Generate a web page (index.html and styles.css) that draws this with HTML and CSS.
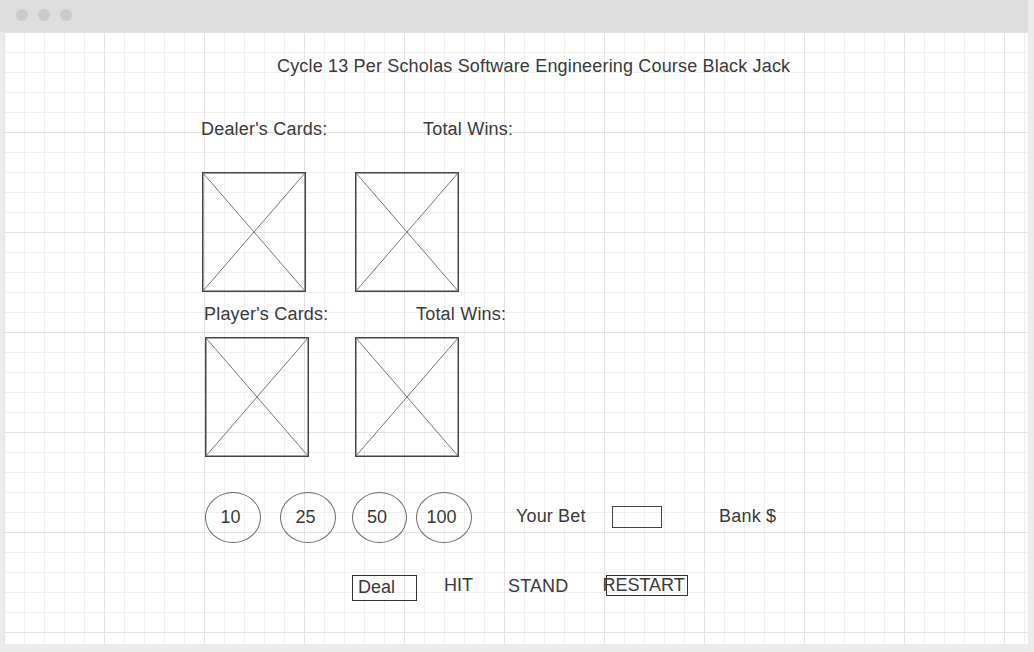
FILE: index.html
```html
<!DOCTYPE html>
<html>
<head>
<meta charset="utf-8">
<title>Black Jack</title>
<link rel="stylesheet" href="styles.css">
</head>
<body>
<div class="window">
  <div class="titlebar">
    <span class="dot"></span><span class="dot"></span><span class="dot"></span>
  </div>
  <div class="canvas">
    <h1 class="title">Cycle 13 Per Scholas Software Engineering Course Black Jack</h1>

    <div class="row labels dealer-labels">
      <span class="label dealer-label">Dealer's Cards:</span>
      <span class="label">Total Wins:</span>
    </div>

    <div class="row cards dealer-cards">
      <svg class="card" viewBox="0 0 104 120" width="104" height="120"><rect x="0.75" y="0.75" width="102.5" height="118.5" class="card-box"/><line x1="1" y1="1" x2="103" y2="119" class="card-x"/><line x1="103" y1="1" x2="1" y2="119" class="card-x"/></svg>
      <svg class="card" viewBox="0 0 104 120" width="104" height="120"><rect x="0.75" y="0.75" width="102.5" height="118.5" class="card-box"/><line x1="1" y1="1" x2="103" y2="119" class="card-x"/><line x1="103" y1="1" x2="1" y2="119" class="card-x"/></svg>
    </div>

    <div class="row labels player-labels">
      <span class="label player-label">Player's Cards:</span>
      <span class="label">Total Wins:</span>
    </div>

    <div class="row cards player-cards">
      <svg class="card" viewBox="0 0 104 120" width="104" height="120"><rect x="0.75" y="0.75" width="102.5" height="118.5" class="card-box"/><line x1="1" y1="1" x2="103" y2="119" class="card-x"/><line x1="103" y1="1" x2="1" y2="119" class="card-x"/></svg>
      <svg class="card" viewBox="0 0 104 120" width="104" height="120"><rect x="0.75" y="0.75" width="102.5" height="118.5" class="card-box"/><line x1="1" y1="1" x2="103" y2="119" class="card-x"/><line x1="103" y1="1" x2="1" y2="119" class="card-x"/></svg>
    </div>

    <div class="row chips">
      <div class="chip chip-10">10</div>
      <div class="chip chip-25">25</div>
      <div class="chip chip-50">50</div>
      <div class="chip chip-100">100</div>
      <span class="bet-label">Your Bet</span>
      <span class="bet-input"></span>
      <span class="bank-label">Bank $</span>
    </div>

    <div class="row actions">
      <span class="btn btn-deal">Deal</span>
      <span class="btn btn-hit">HIT</span>
      <span class="btn btn-stand">STAND</span>
      <span class="btn btn-restart"><span class="restart-text">RESTART</span></span>
    </div>
  </div>
</div>
</body>
</html>
```

FILE: styles.css
```css
html, body {
  margin: 0;
  padding: 0;
}

body {
  background: #ececec;
  font-family: "Liberation Sans", Arial, sans-serif;
  color: #3a3a3a;
  font-size: 18px;
  line-height: 20px;
}

.window {
  width: 1028px;
  height: 644px;
}

.titlebar {
  height: 32px;
  background: #dedede;
  display: flex;
  align-items: center;
  gap: 10px;
  padding-left: 16px;
  padding-bottom: 2px;
  box-sizing: border-box;
}

.dot {
  width: 12px;
  height: 12px;
  border-radius: 50%;
  background: #cbcbcb;
}

.canvas {
  margin-left: 4px;
  height: 612px;
  overflow: hidden;
  background-color: #fff;
  background-image:
    linear-gradient(#e3e3e3 1px, transparent 1px),
    linear-gradient(90deg, #e3e3e3 1px, transparent 1px),
    linear-gradient(#f0f0f0 1px, transparent 1px),
    linear-gradient(90deg, #f0f0f0 1px, transparent 1px);
  background-size: 100px 100px, 100px 100px, 20px 20px, 20px 20px;
}

.title {
  margin: 0;
  font-size: 18px;
  line-height: 20px;
  font-weight: normal;
  padding: 24px 0 0 273px;
  letter-spacing: 0.17px;
}

.row {
  display: flex;
  align-items: flex-start;
}

.label {
  letter-spacing: 0.2px;
}

.dealer-labels {
  margin-top: 43px;
  padding-left: 197px;
}

.dealer-label {
  width: 222px;
}

.dealer-cards {
  margin-top: 33px;
  padding-left: 198px;
  gap: 49px;
}

.player-labels {
  margin-top: 12px;
  padding-left: 200px;
}

.player-label {
  width: 212px;
}

.player-cards {
  margin-top: 13px;
  padding-left: 201px;
  gap: 46px;
}

.card {
  display: block;
}

.card-box {
  fill: none;
  stroke: #444;
  stroke-width: 1.5;
}

.card-x {
  stroke: #777;
  stroke-width: 1;
}

.chips {
  margin-top: 35px;
  padding-left: 201px;
}

.chip {
  box-sizing: border-box;
  width: 56px;
  height: 51px;
  border: 1px solid #6a6a6a;
  border-radius: 50%;
  display: flex;
  align-items: center;
  justify-content: center;
  padding: 0 5px 2px 0;
}

.chip-25 { margin-left: 19px; }
.chip-50 { margin-left: 16px; width: 55px; }
.chip-100 { margin-left: 9px; }

.bet-label {
  margin-left: 44px;
  margin-top: 14px;
  width: 96px;
  letter-spacing: 0.15px;
}

.bet-input {
  margin-top: 14px;
  box-sizing: border-box;
  width: 50px;
  height: 22px;
  border: 1.5px solid #444;
}

.bank-label {
  margin-top: 14px;
  margin-left: 57px;
  letter-spacing: 0.2px;
}

.actions {
  margin-top: 32px;
  padding-left: 348px;
}

.btn {
  display: block;
  box-sizing: border-box;
}

.btn-deal {
  width: 65px;
  height: 26px;
  border: 1px solid #333;
  padding: 1px 0 0 5px;
}

.btn-hit {
  margin-left: 27px;
}

.btn-stand {
  margin-left: 35px;
  padding-top: 1px;
  letter-spacing: 0.15px;
}

.btn-restart {
  margin-left: 38px;
  width: 82px;
  height: 21px;
  border: 1px solid #333;
  line-height: 19px;
  white-space: nowrap;
}

.restart-text {
  margin-left: -5px;
}
```
